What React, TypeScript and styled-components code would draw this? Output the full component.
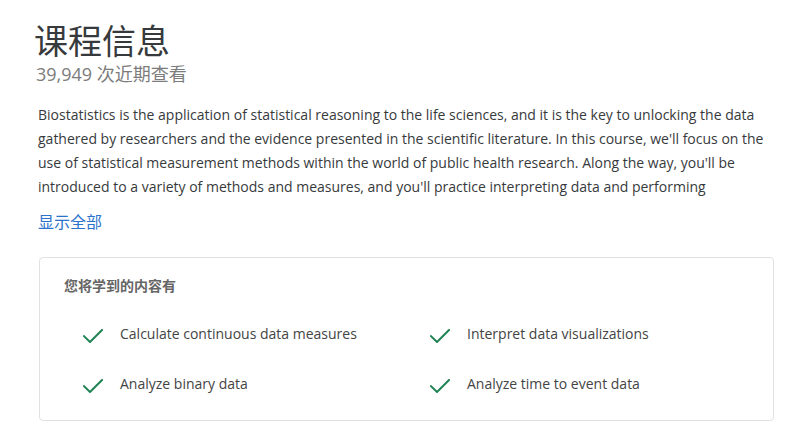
import React from "react";
import styled, { createGlobalStyle } from "styled-components";

const Global = createGlobalStyle`
  html, body { margin: 0; padding: 0; background: #ffffff; }
  body { font-family: "Open Sans", "Noto Sans CJK SC", sans-serif; color: #373a3c; }
`;

const Page = styled.main`
  width: 790px;
  padding: 18px 15px 0 38px;
  box-sizing: border-box;
`;

const Title = styled.h1`
  margin: 0 0 0 -4px;
  font-family: "Noto Sans CJK SC", sans-serif;
  font-size: 34px;
  font-weight: 400;
  line-height: 44px;
  color: #373a3c;
`;

const Views = styled.div`
  font-family: "Open Sans", "Noto Sans CJK SC", sans-serif;
  font-size: 18px;
  line-height: 24px;
  color: #7c7c7c;
  margin-left: -2px;
`;

const Description = styled.p`
  margin: 17px 0 0;
  font-size: 14px;
  line-height: 24px;
  color: #373a3c;
  width: 740px;
`;

const ShowAll = styled.a`
  display: inline-block;
  margin-top: 10px;
  font-family: "Noto Sans CJK SC", sans-serif;
  font-size: 16px;
  line-height: 24px;
  color: #2a73cc;
  text-decoration: none;
  cursor: pointer;
`;

const LearnBox = styled.section`
  margin-top: 24px;
  margin-left: 1px;
  width: 735px;
  box-sizing: border-box;
  border: 1px solid #e1e1e1;
  border-radius: 4px;
  padding: 17px 24px 12px;
`;

const BoxHeading = styled.h2`
  margin: 0;
  font-family: "Noto Sans CJK SC", sans-serif;
  font-size: 14px;
  font-weight: 700;
  line-height: 20px;
  color: #666666;
`;

const Grid = styled.ul`
  list-style: none;
  margin: 13px 0 0;
  padding: 0;
  display: grid;
  grid-template-columns: 347px 1fr;
  grid-auto-rows: 50px;
`;

const Item = styled.li`
  display: flex;
  align-items: center;
  padding-left: 19px;
  font-size: 14px;
  color: #444444;
`;

const Check = styled.svg`
  width: 20px;
  height: 14px;
  margin-top: 6px;
  margin-right: 17px;
  flex: none;
`;

const CheckIcon = () => (
  <Check viewBox="0 0 20 14" fill="none">
    <path d="M1 7.2 L7 13 L19 1" stroke="#1f8354" strokeWidth="2" strokeLinecap="square" />
  </Check>
);

const items = [
  "Calculate continuous data measures",
  "Interpret data visualizations",
  "Analyze binary data",
  "Analyze time to event data",
];

export default function App() {
  return (
    <>
      <Global />
      <Page>
        <Title>课程信息</Title>
        <Views>39,949 次近期查看</Views>
        <Description>
          Biostatistics is the application of statistical reasoning to the life sciences, and it is the key to unlocking the data gathered by researchers and the evidence presented in the scientific literature. In this course, we'll focus on the use of statistical measurement methods within the world of public health research. Along the way, you'll be introduced to a variety of methods and measures, and you'll practice interpreting data and performing
        </Description>
        <ShowAll>显示全部</ShowAll>
        <LearnBox>
          <BoxHeading>您将学到的内容有</BoxHeading>
          <Grid>
            {items.map((t) => (
              <Item key={t}>
                <CheckIcon />
                {t}
              </Item>
            ))}
          </Grid>
        </LearnBox>
      </Page>
    </>
  );
}
